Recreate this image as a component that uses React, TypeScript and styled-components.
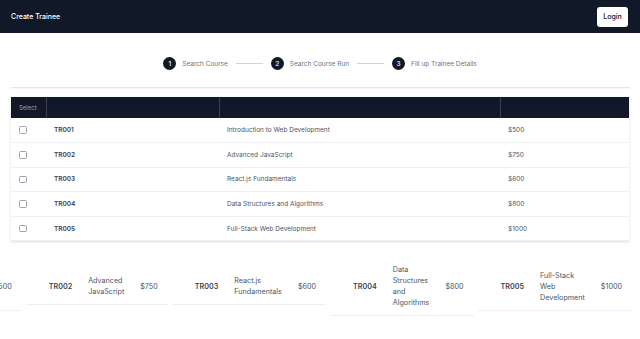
import React from 'react';
import styled, { createGlobalStyle } from 'styled-components';

const GlobalStyle = createGlobalStyle`
  html, body { margin: 0; padding: 0; background: #ffffff; }
  body {
    font-family: Inter, "Noto Sans", "Liberation Sans", sans-serif;
    width: 640px;
    overflow: hidden;
  }
  * { box-sizing: border-box; }
`;

const Header = styled.header`
  height: 33px;
  background: #111827;
  display: flex;
  align-items: center;
  justify-content: space-between;
  padding: 0 12px 0 11px;
`;

const Title = styled.h1`
  margin: 0;
  font-size: 7px;
  font-weight: 500;
  color: #ffffff;
`;

const LoginButton = styled.button`
  width: 31px;
  height: 20px;
  padding: 0;
  border: none;
  border-radius: 3px;
  background: #ffffff;
  color: #111827;
  font-family: inherit;
  font-size: 7px;
  font-weight: 500;
`;

const Stepper = styled.nav`
  display: flex;
  justify-content: center;
  align-items: center;
  gap: 8px;
  padding-top: 24px;
`;

const Step = styled.div`
  display: flex;
  align-items: center;
  gap: 6px;
`;

const StepCircle = styled.span`
  width: 13px;
  height: 13px;
  border-radius: 50%;
  background: #111827;
  color: #ffffff;
  font-size: 6.5px;
  font-weight: 500;
  display: flex;
  align-items: center;
  justify-content: center;
`;

const StepLabel = styled.span`
  font-size: 6.5px;
  color: #6b7280;
`;

const StepLine = styled.span`
  width: 27px;
  height: 1px;
  background: #d1d5db;
`;

const Divider = styled.hr`
  margin: 17px 10px 0 11px;
  border: none;
  height: 1px;
  background: #e5e7eb;
  box-shadow: 0 1px 1px rgba(0, 0, 0, 0.04);
`;

const TableCard = styled.div`
  margin: 9px 11px 0 11px;
  background: #ffffff;
  box-shadow: 0 1px 3px rgba(0, 0, 0, 0.1), 0 1px 2px rgba(0, 0, 0, 0.05);
`;

const Table = styled.table`
  width: 618px;
  border-collapse: collapse;
  table-layout: fixed;
`;

const Th = styled.th<{ $first?: boolean }>`
  height: 21px;
  background: #111827;
  border-left: ${p => (p.$first ? 'none' : '1px solid #374151')};
  padding: 0 0 0 8px;
  text-align: left;
  font-size: 6px;
  font-weight: 400;
  color: #9ca3af;
`;

const Td = styled.td<{ $strong?: boolean }>`
  height: 24.6px;
  padding: 0 0 0 8px;
  border-bottom: 1px solid #f0f1f3;
  font-size: 6.5px;
  font-weight: ${p => (p.$strong ? 600 : 400)};
  color: ${p => (p.$strong ? '#374151' : '#4b5563')};
  vertical-align: middle;
`;

const CheckBox = styled.span`
  display: block;
  width: 7.5px;
  height: 7.5px;
  border: 1px solid #9ca3af;
  border-radius: 1.5px;
  background: #ffffff;
`;

const Strip = styled.div`
  margin-top: 16px;
  display: flex;
  justify-content: flex-end;
  align-items: center;
  gap: 4px;
  padding-right: 8px;
  overflow: hidden;
`;

const RowCard = styled.div`
  flex-shrink: 0;
  display: flex;
  align-items: center;
  gap: 16px;
  padding: 7px 10px 7px 23px;
  border-bottom: 1px solid #eef0f2;
  font-size: 7.2px;
  line-height: 11px;
`;

const CardId = styled.span`
  font-weight: 600;
  color: #374151;
`;

const CardName = styled.span`
  width: min-content;
  color: #4b5563;
`;

const CardPrice = styled.span`
  color: #4b5563;
`;

const courses = [
  { id: 'TR001', name: 'Introduction to Web Development', price: '$500' },
  { id: 'TR002', name: 'Advanced JavaScript', price: '$750' },
  { id: 'TR003', name: 'React.js Fundamentals', price: '$600' },
  { id: 'TR004', name: 'Data Structures and Algorithms', price: '$800' },
  { id: 'TR005', name: 'Full-Stack Web Development', price: '$1000' },
];

const steps = ['Search Course', 'Search Course Run', 'Fill up Trainee Details'];

export default function App() {
  return (
    <>
      <GlobalStyle />
      <Header>
        <Title>Create Trainee</Title>
        <LoginButton>Login</LoginButton>
      </Header>
      <Stepper>
        {steps.map((s, i) => (
          <React.Fragment key={s}>
            {i > 0 && <StepLine />}
            <Step>
              <StepCircle>{i + 1}</StepCircle>
              <StepLabel>{s}</StepLabel>
            </Step>
          </React.Fragment>
        ))}
      </Stepper>
      <Divider />
      <TableCard>
        <Table>
          <colgroup>
            <col style={{ width: 35 }} />
            <col style={{ width: 173 }} />
            <col style={{ width: 281 }} />
            <col style={{ width: 129 }} />
          </colgroup>
          <thead>
            <tr>
              <Th $first>Select</Th>
              <Th />
              <Th />
              <Th />
            </tr>
          </thead>
          <tbody>
            {courses.map(c => (
              <tr key={c.id}>
                <Td>
                  <CheckBox />
                </Td>
                <Td $strong>{c.id}</Td>
                <Td>{c.name}</Td>
                <Td>{c.price}</Td>
              </tr>
            ))}
          </tbody>
        </Table>
      </TableCard>
      <Strip>
        {courses.map(c => (
          <RowCard key={c.id}>
            <CardId>{c.id}</CardId>
            <CardName>{c.name}</CardName>
            <CardPrice>{c.price}</CardPrice>
          </RowCard>
        ))}
      </Strip>
    </>
  );
}
